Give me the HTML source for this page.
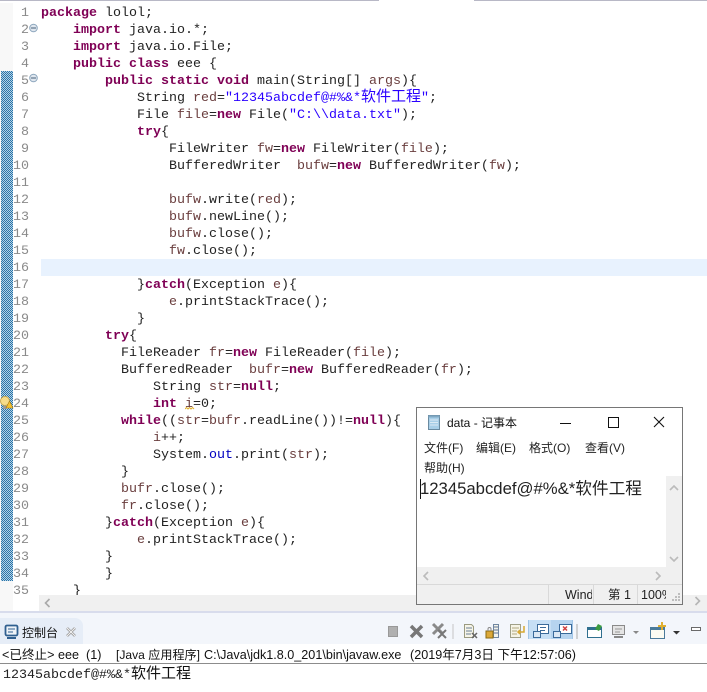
<!DOCTYPE html>
<html><head><meta charset="utf-8"><style>
html,body{margin:0;padding:0;background:#fff}
#r{position:relative;width:707px;height:692px;overflow:hidden;background:#fff;font-family:"Liberation Sans","Noto Sans CJK SC",sans-serif}
.a{position:absolute}
pre{margin:0;position:absolute;left:41px;top:5px;font:13.33px/17px "Liberation Mono","Noto Sans CJK SC",monospace;color:#222;white-space:pre}
#n{position:absolute;left:0;top:5px;width:29px;text-align:right;font:13.33px/17px "Liberation Mono",monospace;color:#8a8a8a;white-space:pre}
b{color:#7f0055;font-weight:bold}
i{font-style:normal;color:#6a3e3e}
u{text-decoration:none;color:#2a00ff}
em{font-style:normal;color:#0000c0}
s{text-decoration:none;font:15px/0 "Noto Sans CJK SC",sans-serif}
.m{font-size:12px;color:#222;white-space:nowrap}
.c{position:absolute;top:646px;font-size:12.6px;line-height:18px;color:#111;white-space:pre}
</style></head><body><div id="r">
<div class="a" style="left:0;top:0;width:379px;height:1px;background:#b8b8c6"></div>
<div class="a" style="left:474px;top:0;width:233px;height:1px;background:#b8b8c6"></div>
<div class="a" style="left:0;top:3px;width:13px;height:608px;background:#f8f8f8"></div>
<svg class="a" style="left:1px;top:71px" width="12" height="510" shape-rendering="crispEdges"><defs><pattern id="h" width="2" height="2" patternUnits="userSpaceOnUse"><rect width="2" height="2" fill="#b4d2e6"/><rect width="1" height="1" fill="#2a74a8"/><rect x="1" y="1" width="1" height="1" fill="#2a74a8"/></pattern></defs><rect width="12" height="510" fill="url(#h)"/></svg>
<div class="a" style="left:41px;top:259px;width:666px;height:17px;background:#e8f2fe"></div>
<div id="n">1
2
3
4
5
6
7
8
9
10
11
12
13
14
15
16
17
18
19
20
21
22
23
24
25
26
27
28
29
30
31
32
33
34
35</div>
<svg class="a" style="left:0;top:0" width="40" height="420">
<circle cx="33.500" cy="28" r="3.800" fill="#dfe6ee" stroke="#8ca6bd"/><path d="M31 28h5" stroke="#45607a"/>
<circle cx="33.500" cy="78" r="3.800" fill="#dfe6ee" stroke="#8ca6bd"/><path d="M31 78h5" stroke="#45607a"/>
<circle cx="5" cy="401" r="4.500" fill="#f6dc8a" stroke="#c8a850"/><path d="M3 406h4v3h-4z" fill="#999"/>
<path d="M9.500 401l3.500 7h-7z" fill="#f5c230" stroke="#a87a10" stroke-width=".6"/>
</svg>
<pre><b>package</b> lolol;
    <b>import</b> java.io.*;
    <b>import</b> java.io.File;
    <b>public class</b> eee {
        <b>public static void</b> main(String[] <i>args</i>){
            String <i>red</i>=<u>"12345abcdef@#%&amp;*<s>软件工程</s>"</u>;
            File <i>file</i>=<b>new</b> File(<u>"C:\\data.txt"</u>);
            <b>try</b>{
                FileWriter <i>fw</i>=<b>new</b> FileWriter(<i>file</i>);
                BufferedWriter  <i>bufw</i>=<b>new</b> BufferedWriter(<i>fw</i>);

                <i>bufw</i>.write(<i>red</i>);
                <i>bufw</i>.newLine();
                <i>bufw</i>.close();
                <i>fw</i>.close();

            }<b>catch</b>(Exception <i>e</i>){
                <i>e</i>.printStackTrace();
            }
        <b>try</b>{
          FileReader <i>fr</i>=<b>new</b> FileReader(<i>file</i>);
          BufferedReader  <i>bufr</i>=<b>new</b> BufferedReader(<i>fr</i>);
              String <i>str</i>=<b>null</b>;
              <b>int</b> <i>i</i>=0;
          <b>while</b>((<i>str</i>=<i>bufr</i>.readLine())!=<b>null</b>){
              <i>i</i>++;
              System.<em>out</em>.print(<i>str</i>);
          }
          <i>bufr</i>.close();
          <i>fr</i>.close();
        }<b>catch</b>(Exception <i>e</i>){
            <i>e</i>.printStackTrace();
        }
        }
    }</pre>
<svg class="a" style="left:185px;top:407px" width="10" height="4"><path d="M0 2l1.500-1.500 1.500 1.500 1.500-1.500 1.500 1.500 1.500-1.500 1.500 1.500" fill="none" stroke="#e0b030"/></svg>

<div class="a" style="left:39px;top:595px;width:668px;height:16px;background:#f0f0f0"></div>
<svg class="a" style="left:43px;top:598px" width="10" height="10"><path d="M6.500 1l-4 4 4 4" fill="none" stroke="#aaa" stroke-width="1.600"/></svg>
<svg class="a" style="left:693px;top:596px" width="10" height="10"><path d="M2.500 1l4 4-4 4" fill="none" stroke="#b5b5b5" stroke-width="1.600"/></svg>

<div class="a" style="left:0;top:611px;width:707px;height:2px;background:#d8dcec"></div>
<div class="a" style="left:0;top:613px;width:707px;height:31px;background:#f3f6fb"></div>
<div class="a" style="left:0;top:618px;width:83px;height:26px;background:#e6edf7;border-radius:0 8px 0 0"></div>
<svg class="a" style="left:4px;top:624px" width="16" height="16"><rect x="1.500" y="1.500" width="12" height="10" rx="1.500" fill="#eef3f8" stroke="#2f5f8f" stroke-width="1.800"/><path d="M4 5h7M4 8h5" stroke="#2f5f8f"/><path d="M3 14h9" stroke="#2f5f8f" stroke-width="2"/></svg>
<div class="a" style="left:22px;top:624px;font-size:12px;color:#111;white-space:nowrap">控制台</div>
<svg class="a" style="left:65px;top:626px" width="12" height="12"><path d="M2 2l8 8M10 2l-8 8" stroke="#999" stroke-width="2.600"/><path d="M2 2l8 8M10 2l-8 8" stroke="#f5f5f5" stroke-width=".9"/></svg>

<svg class="a" style="left:380px;top:612px" width="327" height="40">
<rect x="8.500" y="14.500" width="9" height="10" fill="#b0b0b0" stroke="#999"/>
<path d="M31 14l11 11M42 14l-11 11" stroke="#777" stroke-width="3.500"/>
<path d="M53 12l10 10M63 12l-10 10" stroke="#8a8a8a" stroke-width="3"/><path d="M58 18l8 8M66 18l-8 8" stroke="#777" stroke-width="2"/>
<path d="M73 12v15" stroke="#c4c4c4"/>
<path d="M84.500 12.500h7l2 2v11h-9z" fill="#f6f4e8" stroke="#9a9a80"/><path d="M86 16h6M86 19h6M86 22h5" stroke="#6a7f96"/><path d="M92 21l5 5M97 21l-5 5" stroke="#666" stroke-width="1.500"/>
<rect x="113.500" y="12.500" width="5" height="13" fill="#f4f4ea" stroke="#6f86a0"/><path d="M114 15h4M114 18h4M114 21h4" stroke="#5a6f96"/><rect x="106" y="19" width="7" height="7" fill="#dca838" stroke="#8a6a10"/><path d="M108 19v-2a1.500 1.500 0 0 1 3 0v2" fill="none" stroke="#888"/>
<path d="M130.500 12.500h10v13h-10z" fill="#f6f4e6" stroke="#a0a088"/><path d="M132 16h7M132 19h5M132 22h5" stroke="#b0a880"/><path d="M144 14v6h-6m2-2l-2 2 2 2" fill="none" stroke="#d8a830" stroke-width="1.500"/>
<rect x="148" y="8" width="23" height="19" fill="#c6dff5"/><rect x="171" y="8" width="22" height="19" fill="#b6d4ef"/><path d="M148.500 8v19M192.500 8v19" stroke="#a0c4e6"/>
<rect x="157.500" y="12.500" width="11" height="9" fill="#fff" stroke="#3a6a9a"/><path d="M160 15.500h6M160 18.500h5" stroke="#3a6a9a"/><rect x="153.500" y="19.500" width="7" height="6" fill="#dce8f4" stroke="#3a6a9a"/>
<rect x="179.500" y="12.500" width="12" height="9" fill="#fff" stroke="#3a6a9a"/><path d="M183 14.500l4 4M187 14.500l-4 4" stroke="#d04040" stroke-width="1.500"/><rect x="173.500" y="19.500" width="7" height="6" fill="#dce8f4" stroke="#3a6a9a"/>
<path d="M197 12v15" stroke="#aaa"/>
<rect x="207.500" y="15.500" width="14" height="10" fill="#fff" stroke="#2f6f8f"/><path d="M207 15h15v3h-15z" fill="#2f6f8f"/><path d="M215 17l3-5 4 2-3 5z" fill="#3a9a40"/>
<rect x="232.500" y="13.500" width="12" height="9" fill="#e4e4e4" stroke="#8a8a8a"/><path d="M235 17h7M235 20h5" stroke="#999"/><path d="M234 25h9" stroke="#888" stroke-width="2"/>
<path d="M253 19h6l-3 3z" fill="#888"/>
<rect x="270.500" y="15.500" width="14" height="11" fill="#fbfbf2" stroke="#4a7a9a"/><path d="M270 15h15v3h-15z" fill="#4a7a9a"/><path d="M282 10v8M278 14h8" stroke="#e0b030" stroke-width="2"/>
<path d="M293 19h7l-3.500 3.500z" fill="#333"/>
<rect x="311.500" y="15.500" width="9" height="3" fill="#fff" stroke="#6a6a6a"/>
</svg>

<div class="c" style="left:2px">&lt;已终止&gt; eee  (1)</div>
<div class="c" style="left:116px;font-size:12.1px">[Java 应用程序]</div>
<div class="c" style="left:204px">C:\Java\jdk1.8.0_201\bin\javaw.exe</div>
<div class="c" style="left:410px">(2019年7月3日 下午12:57:06)</div>
<div class="a" style="left:0;top:663px;width:707px;height:1px;background:#8c8c8c"></div>
<div class="a" style="left:3px;top:666px;font:13.33px/19px 'Liberation Mono','Noto Sans CJK SC',monospace;color:#222;white-space:pre">12345abcdef@#%&amp;*<s style="color:#111">软件工程</s></div>

<!-- Notepad -->
<div class="a" style="left:416px;top:407px;width:265px;height:196px;border:1px solid #767676;background:#fff;overflow:hidden">
 <svg class="a" style="left:8px;top:6px" width="18" height="18"><path d="M3.500 1.500h11v14h-11z" fill="#a8cfe8" stroke="#6a8aa0"/><path d="M3.500 1.500h11v2h-11z" fill="#7fa8c4"/><path d="M5 6h8M5 8.500h8M5 11h8" stroke="#dbeaf4"/></svg>
 <div class="a" style="left:30px;top:6px;font-size:12px;color:#111;white-space:nowrap">data - 记事本</div>
 <div class="a" style="left:143px;top:15px;width:11px;height:1px;background:#111"></div>
 <div class="a" style="left:191px;top:9px;width:9px;height:9px;border:1px solid #111"></div>
 <svg class="a" style="left:236px;top:8px" width="12" height="12"><path d="M1 1l10 10M11 1l-10 10" stroke="#111" stroke-width="1.100"/></svg>
 <div class="a m" style="left:7px;top:31px">文件(F)</div>
 <div class="a m" style="left:59px;top:31px">编辑(E)</div>
 <div class="a m" style="left:112px;top:31px">格式(O)</div>
 <div class="a m" style="left:168px;top:31px">查看(V)</div>
 <div class="a m" style="left:7px;top:51px">帮助(H)</div>
 <div class="a" style="left:3px;top:70px;font-size:16.7px;line-height:22px;color:#222;white-space:nowrap">12345abcdef@#%&amp;*软件工程</div>
 <div class="a" style="left:3px;top:71px;width:1px;height:20px;background:#111"></div>
 <div class="a" style="left:249px;top:68px;width:16px;height:92px;background:#f0f0f0"></div>
 <svg class="a" style="left:252px;top:76px" width="10" height="8"><path d="M1 6l4-4 4 4" fill="none" stroke="#bbb" stroke-width="1.600"/></svg>
 <svg class="a" style="left:252px;top:147px" width="10" height="8"><path d="M1 2l4 4 4-4" fill="none" stroke="#bbb" stroke-width="1.600"/></svg>
 <div class="a" style="left:0;top:159px;width:265px;height:17px;background:#f0f0f0"></div>
 <svg class="a" style="left:5px;top:163px" width="8" height="10"><path d="M6 1l-4 4 4 4" fill="none" stroke="#bbb" stroke-width="1.600"/></svg>
 <svg class="a" style="left:237px;top:163px" width="8" height="10"><path d="M2 1l4 4-4 4" fill="none" stroke="#bbb" stroke-width="1.600"/></svg>
 <div class="a" style="left:0;top:176px;width:265px;height:20px;background:#f0f0f0;border-top:1px solid #d9d9d9;box-sizing:border-box"></div>
 <div class="a" style="left:131px;top:176px;width:1px;height:20px;background:#d9d9d9"></div>
 <div class="a" style="left:176px;top:176px;width:1px;height:20px;background:#d9d9d9"></div>
 <div class="a" style="left:220px;top:176px;width:1px;height:20px;background:#d9d9d9"></div>
 <div class="a" style="left:148px;top:179px;width:27px;height:16px;overflow:hidden;font-size:12.5px;line-height:16px;color:#222;white-space:nowrap">Windows</div>
 <div class="a" style="left:191px;top:179px;width:28px;height:16px;overflow:hidden;font-size:12.5px;line-height:16px;color:#222;white-space:nowrap">第 1</div>
 <div class="a" style="left:224px;top:179px;width:25px;height:16px;overflow:hidden;font-size:12.5px;line-height:16px;color:#222;white-space:nowrap">100%</div>
 <svg class="a" style="left:254px;top:184px" width="10" height="10"><path d="M7 1h2v2h-2zM4 4h2v2h-2zM7 4h2v2h-2zM1 7h2v2h-2zM4 7h2v2h-2zM7 7h2v2h-2z" fill="#bdbdbd"/></svg>
</div>
</div></body></html>
